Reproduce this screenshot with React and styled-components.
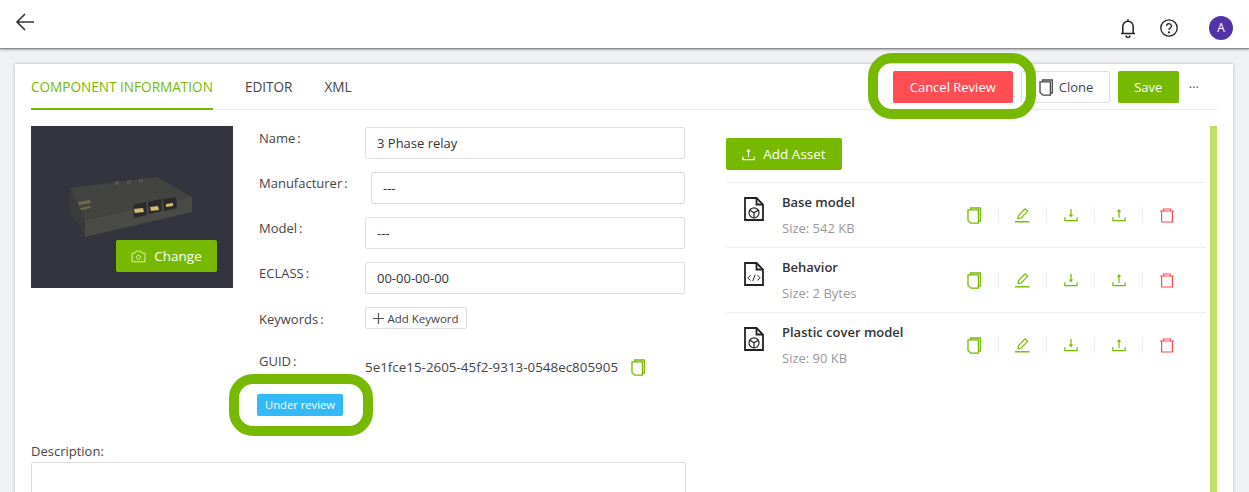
import React from 'react';
import styled, { createGlobalStyle } from 'styled-components';

const GREEN = '#76b900';
const RED = '#ff4d54';

const ASSETS = [
  { name: 'Base model', size: 'Size: 542 KB', kind: 'model' },
  { name: 'Behavior', size: 'Size: 2 Bytes', kind: 'code' },
  { name: 'Plastic cover model', size: 'Size: 90 KB', kind: 'model' },
];

const FIELDS = [
  { label: 'Name', value: '3 Phase relay' },
  { label: 'Manufacturer', value: '---', shift: true },
  { label: 'Model', value: '---' },
  { label: 'ECLASS', value: '00-00-00-00' },
];

const BackIcon = () => (
  <svg width="20" height="18" viewBox="0 0 20 18" fill="none" stroke="#333" strokeWidth="1.6">
    <path d="M19 9H2M10 1L2 9l8 8" />
  </svg>
);

const BellIcon = () => (
  <svg width="16" height="20" viewBox="0 0 16 20" fill="none" stroke="#222" strokeWidth="1.5">
    <path d="M1 15.5h14M2.8 15.5V8.5a5.2 5.2 0 0 1 10.4 0v7M8 1.2v2M6 17.5a2 2 0 0 0 4 0" />
  </svg>
);

const HelpIcon = () => (
  <svg width="18" height="18" viewBox="0 0 18 18" fill="none" stroke="#222" strokeWidth="1.3">
    <circle cx="9" cy="9" r="8.2" />
    <path d="M6.6 7a2.4 2.4 0 1 1 3.6 2.1c-.8.5-1.2.9-1.2 1.9" />
    <circle cx="9" cy="13.3" r=".5" fill="#222" />
  </svg>
);

const CopyIcon = ({ color = GREEN }) => (
  <svg width="14" height="17" viewBox="0 0 14 17" fill="none" stroke={color} strokeWidth="1.3">
    <path d="M3.5 2.8V1h9.8v13.2h-1.6" />
    <path d="M1 2.8h10.4v13.4H4L1 13.4z" />
  </svg>
);

const EditIcon = () => (
  <svg width="15" height="15" viewBox="0 0 15 15" fill="none" stroke={GREEN} strokeWidth="1.2">
    <path d="M3 10.5l.6-3L10 .9l2.6 2.4-6.5 6.7z" />
    <path d="M0 13.8h14.5" strokeWidth="1.4" />
  </svg>
);

const DownloadIcon = () => (
  <svg width="14" height="14" viewBox="0 0 16 16" fill="none" stroke={GREEN} strokeWidth="1.4">
    <path d="M1 10.5v3.8h14v-3.8" />
    <path d="M8 1v8.5" />
    <path d="M5.8 7.6h4.4L8 10.4z" fill={GREEN} strokeWidth=".4" />
  </svg>
);

const UploadIcon = ({ color = GREEN, size = 14 }) => (
  <svg width={size} height={size} viewBox="0 0 16 16" fill="none" stroke={color} strokeWidth="1.4">
    <path d="M1 10.5v3.8h14v-3.8" />
    <path d="M8 11V3" />
    <path d="M5.8 4.2h4.4L8 1.4z" fill={color} strokeWidth=".4" />
  </svg>
);

const TrashIcon = () => (
  <svg width="14" height="15" viewBox="0 0 14 15" fill="none" stroke={RED} strokeWidth="1.2">
    <path d="M0 3h14M3.5 3V1h7v2M1.6 3v11h10.8V3" />
  </svg>
);

const CameraIcon = () => (
  <svg width="15" height="13" viewBox="0 0 15 13" fill="none" stroke="#dff0bd" strokeWidth="1">
    <path d="M1 3.2h3l1-2h5l1 2h3v8.6H1z" />
    <circle cx="7.5" cy="7.3" r="2" />
  </svg>
);

const PlusIcon = () => (
  <svg width="11" height="11" viewBox="0 0 11 11" stroke="#555" strokeWidth="1.2">
    <path d="M5.5 0v11M0 5.5h11" />
  </svg>
);

const FileIcon = ({ kind }) => (
  <svg width="20" height="24" viewBox="0 0 20 24" fill="none" stroke="#222" strokeWidth="1.8">
    <path d="M1 1h11.5L19 7.5V23H1z" />
    <path d="M12.5 1v6.5H19" />
    {kind === 'model' ? (
      <g strokeWidth="1.2">
        <circle cx="10" cy="15.8" r="5" />
        <path d="M5.8 13.2l4.2 2.6 4.2-2.6M10 15.8V21" />
      </g>
    ) : (
      <g strokeWidth="1">
        <path d="M6.5 13.2l-2.6 2.6 2.6 2.6M13.5 13.2l2.6 2.6-2.6 2.6M11.2 12.6l-2.4 6.4" />
      </g>
    )}
  </svg>
);

// the relay render is a picture in the original, redrawn here
const RelayModel = () => (
  <svg width="128" height="64" viewBox="0 0 128 64">
    <path d="M1 13L88 2l35 20L16 45z" fill="#434340" />
    <path d="M16 45l107-23v15L16 62z" fill="#4a4a47" />
    <path d="M1 13l15 32v17L1 38z" fill="#3b3b39" />
    <path d="M64 30l13-3 1 13-13 3zM79 27l13-3 1 12-13 3zM94 24l13-2 1 11-13 3z" fill="#2a2a2e" />
    <path d="M65 34l9-1 1 4-9 1zM81 32l8-1 1 4-8 1zM97 29l7-1 0 3-7 1z" fill="#d2bb6c" />
    <path d="M9 27l12-2 1 3-12 2zM11 33l10-2 1 2-10 2z" fill="#6f6a4e" />
    <path d="M46 6h4v4h-4zM58 5h4v4h-4zM70 4h4v4h-4z" fill="#52524e" />
  </svg>
);

const App = () => (
  <Page>
    <GlobalStyle />
    <Header>
      <BackButton><BackIcon /></BackButton>
      <HeaderIcons>
        <BellIcon />
        <HelpIcon />
        <Avatar>A</Avatar>
      </HeaderIcons>
    </Header>
    <Card>
      <TabBar>
        <Tab $active>COMPONENT INFORMATION</Tab>
        <Tab>EDITOR</Tab>
        <Tab>XML</Tab>
        <TabActions>
          <CancelButton>Cancel Review</CancelButton>
          <CloneButton><CopyIcon color="#444" />Clone</CloneButton>
          <SaveButton>Save</SaveButton>
          <MoreDots>···</MoreDots>
        </TabActions>
        <Highlight $top={-11} $left={837} $width={168} $height={66} />
      </TabBar>
      <Columns>
        <LeftColumn>
          <TopRow>
            <Thumbnail>
              <ModelSlot><RelayModel /></ModelSlot>
              <ChangeButton><CameraIcon />Change</ChangeButton>
            </Thumbnail>
            <Form>
              {FIELDS.map((f) => (
                <FieldRow key={f.label}>
                  <Label>{f.label}<Colon>:</Colon></Label>
                  <TextInput $shift={f.shift} readOnly value={f.value} />
                </FieldRow>
              ))}
              <KeywordRow>
                <Label>Keywords<Colon>:</Colon></Label>
                <KeywordButton><PlusIcon />Add Keyword</KeywordButton>
              </KeywordRow>
              <GuidRow>
                <Label>GUID<Colon>:</Colon></Label>
                <GuidValue>5e1fce15-2605-45f2-9313-0548ec805905</GuidValue>
                <GuidCopy><CopyIcon /></GuidCopy>
              </GuidRow>
              <Badge>Under review</Badge>
              <Highlight $top={248} $left={-30} $width={144} $height={62} />
            </Form>
          </TopRow>
          <DescriptionLabel>Description:</DescriptionLabel>
          <Description />
        </LeftColumn>
        <RightColumn>
          <AddAsset><UploadIcon color="#fff" size={13} />Add Asset</AddAsset>
          <AssetList>
            {ASSETS.map((a) => (
              <AssetRow key={a.name}>
                <FileSlot><FileIcon kind={a.kind} /></FileSlot>
                <AssetText>
                  <AssetName>{a.name}</AssetName>
                  <AssetSize>{a.size}</AssetSize>
                </AssetText>
                <ActionGroup>
                  <Action><CopyIcon /></Action>
                  <Action><EditIcon /></Action>
                  <Action><DownloadIcon /></Action>
                  <Action><UploadIcon /></Action>
                  <Action><TrashIcon /></Action>
                </ActionGroup>
              </AssetRow>
            ))}
          </AssetList>
        </RightColumn>
        <ScrollThumb />
      </Columns>
    </Card>
  </Page>
);

const GlobalStyle = createGlobalStyle`
  html, body {
    margin: 0;
    height: 100%;
    overflow: hidden;
    background: #eff1f5;
  }
  body {
    font-family: "Open Sans", "Noto Sans", sans-serif;
    color: #333;
  }
`;

const Page = styled.div`
  height: 492px;
  overflow: hidden;
`;

const Header = styled.header`
  height: 48px;
  background: #fff;
  border-bottom: 1px solid #8b8b8b;
  box-shadow: 0 1px 2px rgba(0, 0, 0, 0.3);
  display: flex;
  justify-content: space-between;
  padding: 0 16px 0 15px;
`;

const BackButton = styled.div`
  height: 44px;
  display: flex;
  align-items: center;
`;

const HeaderIcons = styled.div`
  display: flex;
  align-items: center;
  gap: 24px;
  padding-top: 7px;
  height: 48px;
  box-sizing: border-box;
`;

const Avatar = styled.div`
  width: 24px;
  height: 24px;
  margin-left: 7px;
  border-radius: 50%;
  background: #5333a6;
  color: #fff;
  font-size: 12px;
  display: flex;
  align-items: center;
  justify-content: center;
`;

const Card = styled.main`
  margin: 15px 16px 0 15px;
  height: 440px;
  padding: 0 16px;
  background: #fff;
  box-shadow: 0 0 3px rgba(0, 0, 0, 0.25);
`;

const TabBar = styled.nav`
  position: relative;
  height: 45px;
  display: flex;
  align-items: stretch;
  gap: 32px;
  border-bottom: 1px solid #e9e9e9;
`;

const Tab = styled.div`
  font-size: 13.58px;
  line-height: 46px;
  color: ${(p) => (p.$active ? GREEN : '#444')};
  border-bottom: 2px solid ${(p) => (p.$active ? GREEN : 'transparent')};
  height: 44px;
`;

const TabActions = styled.div`
  margin-left: auto;
  margin-right: 18px;
  display: flex;
  align-items: flex-start;
  padding-top: 7px;
  gap: 8px;
`;

const PrimaryButton = styled.button`
  height: 32px;
  border: 0;
  border-radius: 2px;
  color: #fff;
  font: 13px "Open Sans", sans-serif;
  background: ${GREEN};
  display: flex;
  align-items: center;
  justify-content: center;
  padding: 0;
`;

const CancelButton = styled(PrimaryButton)`
  width: 120px;
  background: ${RED};
`;

const CloneButton = styled(PrimaryButton)`
  width: 89px;
  background: #fff;
  color: #444;
  border: 1px solid #ddd;
  gap: 6px;
  justify-content: flex-start;
  padding-left: 17px;
`;

const SaveButton = styled(PrimaryButton)`
  width: 61px;
`;

const MoreDots = styled.span`
  font-size: 13px;
  line-height: 32px;
  margin-left: 2px;
  color: #555;
`;

const Highlight = styled.div`
  position: absolute;
  top: ${(p) => p.$top}px;
  left: ${(p) => p.$left}px;
  width: ${(p) => p.$width}px;
  height: ${(p) => p.$height}px;
  border: 10px solid ${GREEN};
  border-radius: 24px;
  box-sizing: border-box;
  pointer-events: none;
`;

const Columns = styled.section`
  display: flex;
  padding-top: 16px;
  position: relative;
`;

const LeftColumn = styled.div`
  width: 655px;
  flex: none;
`;

const TopRow = styled.div`
  display: flex;
  gap: 26px;
`;

const Thumbnail = styled.div`
  position: relative;
  width: 202px;
  height: 162px;
  flex: none;
  background: #33343e;
  display: flex;
`;

const ModelSlot = styled.div`
  padding: 49px 0 0 38px;
`;

const ChangeButton = styled(PrimaryButton)`
  position: absolute;
  right: 16px;
  bottom: 16px;
  width: 101px;
  gap: 8px;
  font-size: 13.5px;
`;

const Form = styled.div`
  position: relative;
  flex: 1;
  padding: 1px 1px 0 0;
`;

const FieldRow = styled.div`
  display: flex;
  align-items: flex-start;
  height: 45px;
`;

const Label = styled.div`
  font-size: 13px;
  line-height: 20px;
  padding-top: 1px;
  color: #444;
  white-space: nowrap;
  min-width: 106px;
`;

const Colon = styled.span`
  margin-left: 2px;
`;

const TextInput = styled.input`
  box-sizing: border-box;
  flex: 1;
  min-width: 0;
  height: 32px;
  margin-left: ${(p) => (p.$shift ? '6px' : '0')};
  border: 1px solid #ddd;
  border-radius: 2px;
  padding: 0 11px;
  font: 13px "Open Sans", sans-serif;
  color: #333;
  outline: none;
`;

const KeywordRow = styled.div`
  display: flex;
  align-items: center;
  height: 22px;
`;

const KeywordButton = styled.button`
  height: 22px;
  width: 102px;
  background: #fff;
  border: 1px solid #ddd;
  border-radius: 2px;
  font: 11.5px "Open Sans", sans-serif;
  color: #444;
  display: flex;
  align-items: center;
  justify-content: center;
  gap: 3px;
  padding: 0;
`;

const GuidRow = styled.div`
  display: flex;
  align-items: flex-start;
  margin-top: 21px;
  height: 37px;
`;

const GuidValue = styled.span`
  font-size: 13.4px;
  line-height: 18px;
  padding-top: 8px;
  margin-right: 13px;
  color: #444;
`;

const GuidCopy = styled.span`
  margin-top: 9px;
  display: flex;
`;

const Badge = styled.div`
  margin-left: -2px;
  margin-top: 7px;
  height: 22px;
  line-height: 22px;
  width: 86px;
  text-align: center;
  background: #33b8f8;
  color: #fff;
  border-radius: 2px;
  font-size: 11.2px;
`;

const DescriptionLabel = styled.div`
  margin-top: 26px;
  font-size: 13px;
  line-height: 18px;
  color: #444;
`;

const Description = styled.div`
  height: 60px;
  margin-top: 2px;
  border: 1px solid #ddd;
  border-radius: 2px;
`;

const RightColumn = styled.div`
  width: 480px;
  margin-left: 40px;
  padding-top: 12px;
`;

const AddAsset = styled(PrimaryButton)`
  width: 116px;
  gap: 8px;
  font-size: 13.5px;
`;

const AssetList = styled.ul`
  list-style: none;
  margin: 12px 0 0;
  padding: 0;
`;

const AssetRow = styled.li`
  height: 65px;
  box-sizing: border-box;
  border-top: 1px solid #eee;
  display: flex;
  align-items: center;
`;

const FileSlot = styled.div`
  width: 56px;
  padding-left: 18px;
  box-sizing: border-box;
  display: flex;
  margin-top: -12px;
`;

const AssetText = styled.div`
  flex: 1;
  display: flex;
  flex-direction: column;
  gap: 8px;
`;

const AssetName = styled.div`
  font-size: 13px;
  font-weight: 600;
  line-height: 18px;
  color: #333;
`;

const AssetSize = styled.div`
  font-size: 13px;
  line-height: 18px;
  color: #999;
`;

const ActionGroup = styled.div`
  display: flex;
  align-items: center;
  margin-right: 16px;
`;

const Action = styled.div`
  box-sizing: border-box;
  width: 48px;
  height: 16px;
  display: flex;
  align-items: center;
  justify-content: center;
  & + & {
    border-left: 1px solid #eee;
  }
`;

const ScrollThumb = styled.div`
  position: absolute;
  right: 0;
  top: 16px;
  width: 7px;
  height: 400px;
  background: #bfdf66;
`;

export default App;
